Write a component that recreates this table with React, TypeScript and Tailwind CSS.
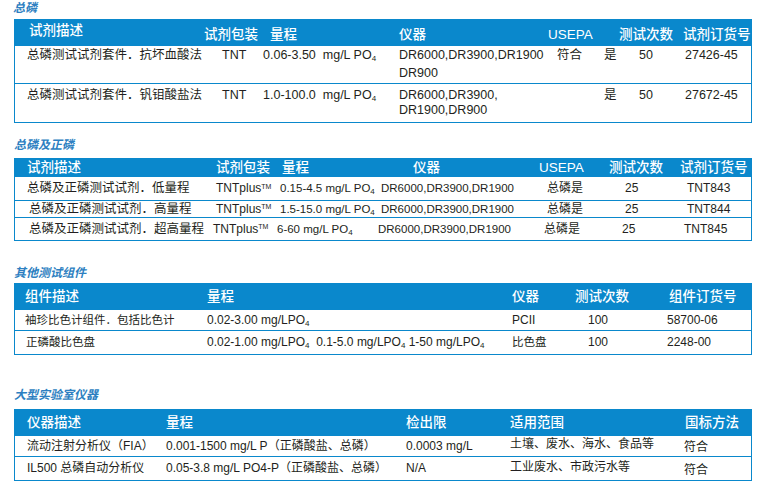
const Po = () => (
  <>
    PO<sub className="text-[8px]">4</sub>
  </>
);

const title = "text-[12px] leading-[14px] italic font-bold text-[#2d7fc1]";
const head = "bg-[#0a88cc] text-white text-[13.5px] font-medium flex";
const row = "border-x border-b border-[#0a88cc] flex";

export default function App() {
  return (
    <div className="w-[765px] h-[493px] bg-white text-[#231f20] font-['Liberation_Sans','Noto_Sans_CJK_SC',sans-serif] pl-[14px] pt-[1px] overflow-hidden">
      {/* 总磷 */}
      <h2 className={`${title} -ml-[1px]`}>总磷</h2>
      <div className="mt-[4px] w-[738px]">
        <div className={`${head} h-[27px] items-start leading-[16px] pl-[15px]`}>
          <div className="w-[175px] pt-[4px]">试剂描述</div>
          <div className="w-[66px] pt-[8px]">试剂包装</div>
          <div className="w-[129px] pt-[8px]">量程</div>
          <div className="w-[149px] pt-[8px]">仪器</div>
          <div className="w-[71px] pt-[8px]">USEPA</div>
          <div className="w-[64px] pt-[8px]">测试次数</div>
          <div className="pt-[8px]">试剂订货号</div>
        </div>
        <div className={`${row} h-[38px] items-start pl-[12px] text-[12.5px] leading-[18px]`}>
          <div className="w-[195px]">总磷测试试剂套件．抗坏血酸法</div>
          <div className="w-[41px]">TNT</div>
          <div className="w-[136px] whitespace-pre">
            0.06-3.50  mg/L <Po />
          </div>
          <div className="w-[158px]">
            DR6000,DR3900,DR1900
            <br />
            DR900
          </div>
          <div className="w-[47px]">符合</div>
          <div className="w-[35px]">是</div>
          <div className="w-[46px]">50</div>
          <div>27426-45</div>
        </div>
        <div className={`${row} h-[39px] items-start pl-[12px] pt-[4px] text-[12.5px] leading-[15px]`}>
          <div className="w-[195px]">总磷测试试剂套件．钒钼酸盐法</div>
          <div className="w-[41px]">TNT</div>
          <div className="w-[136px] whitespace-pre">
            1.0-100.0  mg/L <Po />
          </div>
          <div className="w-[158px]">
            DR6000,DR3900,
            <br />
            DR1900,DR900
          </div>
          <div className="w-[47px]"></div>
          <div className="w-[35px]">是</div>
          <div className="w-[46px]">50</div>
          <div>27672-45</div>
        </div>
      </div>

      {/* 总磷及正磷 */}
      <h2 className={`${title} mt-[15px]`}>总磷及正磷</h2>
      <div className="mt-[6px] w-[738px]">
        <div className={`${head} h-[19px] items-center leading-[19px] pl-[13px]`}>
          <div className="w-[189px]">试剂描述</div>
          <div className="w-[66px]">试剂包装</div>
          <div className="w-[131px]">量程</div>
          <div className="w-[126px]">仪器</div>
          <div className="w-[70px]">USEPA</div>
          <div className="w-[71px]">测试次数</div>
          <div>试剂订货号</div>
        </div>
        {[
          { d: "总磷及正磷测试试剂．低量程", r: "0.15-4.5 mg/L ", o: "TNT843", h: "h-[24px]", dp: "", pp: "" },
          { d: "总磷及正磷测试试剂．高量程", r: "1.5-15.0 mg/L ", o: "TNT844", h: "h-[17px]", dp: "pl-[2px]", pp: "" },
          { d: "总磷及正磷测试试剂．超高量程", r: "6-60 mg/L ", o: "TNT845", h: "h-[23px]", dp: "pl-[2px]", pp: "-ml-[3px]" },
        ].map((x) => (
          <div key={x.o} className={`${row} ${x.h} items-center pl-[12px] text-[11.5px] leading-[15px]`}>
            <div className={`w-[189px] text-[12.5px] whitespace-nowrap ${x.dp}`}>{x.d}</div>
            <div className={`w-[64px] text-[12px] ${x.pp}`}>
              TNTplus<sup className="text-[7px]">TM</sup>
            </div>
            <div className="w-[101px] whitespace-nowrap">
              {x.r}
              <Po />
            </div>
            <div className="w-[166px]">DR6000,DR3900,DR1900</div>
            <div className="w-[78px] text-[12px]">总磷是</div>
            <div className="w-[62px] text-[12px]">25</div>
            <div className="text-[12px]">{x.o}</div>
          </div>
        ))}
      </div>

      {/* 其他测试组件 */}
      <h2 className={`${title} mt-[25px]`}>其他测试组件</h2>
      <div className="mt-[3px] w-[738px]">
        <div className={`${head} h-[27px] items-center leading-[18px] pl-[11px]`}>
          <div className="w-[182px]">组件描述</div>
          <div className="w-[305px]">量程</div>
          <div className="w-[63px]">仪器</div>
          <div className="w-[94px]">测试次数</div>
          <div>组件订货号</div>
        </div>
        <div className={`${row} h-[21px] items-center pl-[10px] text-[12px] leading-[15px]`}>
          <div className="w-[182px] text-[11.5px]">袖珍比色计组件．包括比色计</div>
          <div className="w-[305px]">
            0.02-3.00 mg/L<Po />
          </div>
          <div className="w-[76px]">PCII</div>
          <div className="w-[79px]">100</div>
          <div>58700-06</div>
        </div>
        <div className={`${row} h-[24px] items-center pl-[10px] text-[12px] leading-[15px]`}>
          <div className="w-[182px] text-[11.5px] pl-[1px]">正磷酸比色盘</div>
          <div className="w-[305px] whitespace-pre">
            0.02-1.00 mg/L<Po />  0.1-5.0 mg/L<Po /> 1-50 mg/L<Po />
          </div>
          <div className="w-[76px] text-[11.5px]">比色盘</div>
          <div className="w-[79px]">100</div>
          <div>2248-00</div>
        </div>
      </div>

      {/* 大型实验室仪器 */}
      <h2 className={`${title} mt-[33px]`}>大型实验室仪器</h2>
      <div className="mt-[7px] w-[738px]">
        <div className={`${head} h-[27px] items-center leading-[18px] pl-[13px]`}>
          <div className="w-[139px]">仪器描述</div>
          <div className="w-[240px]">量程</div>
          <div className="w-[104px]">检出限</div>
          <div className="w-[175px]">适用范围</div>
          <div>国标方法</div>
        </div>
        <div className={`${row} h-[21px] items-center pl-[12px] text-[12px] leading-[15px]`}>
          <div className="w-[139px]">流动注射分析仪（FIA）</div>
          <div className="w-[240px]">0.001-1500 mg/L P（正磷酸盐、总磷）</div>
          <div className="w-[104px]">0.0003 mg/L</div>
          <div className="w-[174px] mb-[3px]">土壤、废水、海水、食品等</div>
          <div className="mt-[3px]">符合</div>
        </div>
        <div className={`${row} h-[24px] items-center pl-[12px] text-[12px] leading-[15px]`}>
          <div className="w-[139px]">IL500 总磷自动分析仪</div>
          <div className="w-[240px]">0.05-3.8 mg/L PO4-P（正磷酸盐、总磷）</div>
          <div className="w-[104px]">N/A</div>
          <div className="w-[174px] mb-[3px]">工业废水、市政污水等</div>
          <div className="mt-[3px]">符合</div>
        </div>
      </div>
    </div>
  );
}
